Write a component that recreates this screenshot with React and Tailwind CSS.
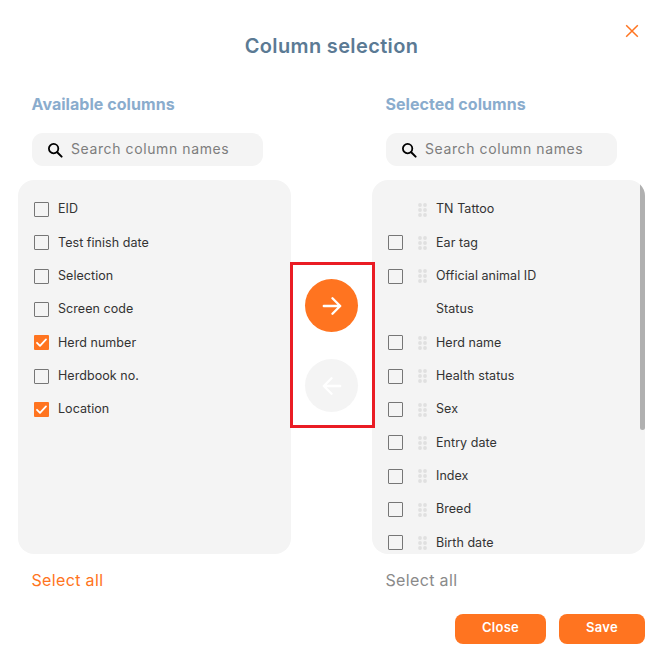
import React from "react";

const Check = ({ checked }) => (
  <span className={checked ? "flex h-[15px] w-[15px] shrink-0 items-center justify-center rounded-[1px] bg-[#ff7420]" : "h-[15px] w-[15px] shrink-0 rounded-[1px] border border-[#767676] bg-[#f4f4f4]"}>
    {checked && (
      <svg width="13" height="13" viewBox="0 0 13 13" fill="none">
        <path d="M2 6.8 L5 9.8 L11 3.4" stroke="#fff" strokeWidth="1.8" strokeLinecap="round" strokeLinejoin="round" />
      </svg>
    )}
  </span>
);

const Dots = () => (
  <svg width="9" height="14" viewBox="0 0 9 14" className="shrink-0" fill="#e0e0e0">
    {[2, 7, 12].map((y) => (
      <g key={y}>
        <circle cx="2" cy={y} r="1.9" />
        <circle cx="7" cy={y} r="1.9" />
      </g>
    ))}
  </svg>
);

const SearchBox = () => (
  <div className="ml-[14px] flex h-[33px] w-[231px] items-center rounded-[11px] bg-[#f4f4f4] pl-[15px]">
    <svg width="16" height="16" viewBox="0 0 16 16" fill="none" className="shrink-0">
      <circle cx="6.6" cy="6.6" r="4.7" stroke="#000" strokeWidth="1.8" />
      <path d="M10.2 10.2 L14.6 14.6" stroke="#000" strokeWidth="2" strokeLinecap="round" />
    </svg>
    <span className="ml-[8px] pb-[2px] text-[14px] leading-none tracking-[0.6px] text-[#7d7d7d]">Search column names</span>
  </div>
);

const left = [
  ["EID"],
  ["Test finish date"],
  ["Selection"],
  ["Screen code"],
  ["Herd number", true],
  ["Herdbook no."],
  ["Location", true],
];

const right = [
  ["TN Tattoo", true],
  ["Ear tag"],
  ["Official animal ID"],
  ["Status", true, true],
  ["Herd name"],
  ["Health status"],
  ["Sex"],
  ["Entry date"],
  ["Index"],
  ["Breed"],
  ["Birth date"],
];

const Heading = ({ children }) => (
  <h2 className="h-[24px] pl-[13.5px] text-[16px] font-bold leading-[23px] tracking-[0.05px] text-[#8aaccd]">{children}</h2>
);

export default function App() {
  return (
    <div className="relative h-[650px] w-[665px] overflow-hidden bg-white font-['Inter',sans-serif]">
      <button className="absolute right-[26px] top-[24px] text-[#ff7420]" aria-label="close">
        <svg width="14" height="14" viewBox="0 0 14 14" fill="none">
          <path d="M1.2 1.2 L12.8 12.8 M12.8 1.2 L1.2 12.8" stroke="currentColor" strokeWidth="1.5" />
        </svg>
      </button>

      <h1 className="pr-[2px] pt-[32px] text-center text-[20px] font-semibold leading-[28px] tracking-[0.35px] text-[#5b7a94]">Column selection</h1>

      <div className="mt-[33px] flex px-[18px]">
        <section className="w-[273px] shrink-0">
          <Heading>Available columns</Heading>
          <div className="mt-[16px]"><SearchBox /></div>
          <div className="mt-[14px] h-[374px] rounded-[16px] bg-[#f4f4f4] pl-[16px] pt-[13px]">
            {left.map(([t, c]) => (
              <div key={t} className="flex h-[33.33px] items-center">
                <Check checked={c} />
                <span className="ml-[9px] text-[12.5px] leading-none tracking-[0.05px] text-[#333]">{t}</span>
              </div>
            ))}
          </div>
          <button className="mt-[16px] block pl-[13.5px] text-[16px] leading-[20px] tracking-[0.35px] text-[#ff7420]">Select all</button>
        </section>

        <div className="relative z-10 w-[81px] shrink-0">
          <div className="-ml-[1px] mt-[169px] flex h-[166px] w-[85px] flex-col items-center border-[3px] border-[#ea1c24] pr-[2px] pt-[14px]">
            <button className="flex h-[53px] w-[53px] items-center justify-center rounded-full bg-[#ff7420]" aria-label="add">
              <svg width="20" height="20" viewBox="0 0 22 22" fill="none" stroke="#fff" strokeWidth="2.6" strokeLinecap="round" strokeLinejoin="round">
                <path d="M2 11 H20 M11.5 2.5 L20 11 L11.5 19.5" />
              </svg>
            </button>
            <button className="mt-[27px] flex h-[53px] w-[53px] items-center justify-center rounded-full bg-[#f4f4f4]" aria-label="remove">
              <svg width="20" height="20" viewBox="0 0 22 22" fill="none" stroke="#fff" strokeWidth="2.6" strokeLinecap="round" strokeLinejoin="round">
                <path d="M20 11 H2 M10.5 2.5 L2 11 L10.5 19.5" />
              </svg>
            </button>
          </div>
        </div>

        <section className="w-[273px] shrink-0">
          <Heading>Selected columns</Heading>
          <div className="mt-[16px]"><SearchBox /></div>
          <div className="relative mt-[14px] h-[374px] overflow-hidden rounded-[16px] bg-[#f4f4f4] pl-[16px] pt-[13px]">
            {right.map(([t, noCheck, noDots]) => (
              <div key={t} className="flex h-[33.33px] items-center">
                {noCheck ? <span className="h-[15px] w-[15px] shrink-0" /> : <Check />}
                <span className="ml-[15px] flex w-[9px] shrink-0">{!noDots && <Dots />}</span>
                <span className="ml-[9px] text-[12.5px] leading-none tracking-[0.05px] text-[#333]">{t}</span>
              </div>
            ))}
            <div className="absolute right-0 top-0 h-[250px] w-[5px] rounded-full bg-[#b0b0b0]" />
          </div>
          <button className="mt-[16px] block pl-[13.5px] text-[16px] leading-[20px] tracking-[0.35px] text-[#8a8a8a]">Select all</button>
          <div className="mt-[24px] flex justify-end gap-[13px]">
            <button className="h-[30px] w-[91px] rounded-[8px] bg-[#ff7420] pb-[2px] text-[13px] font-semibold tracking-[0.3px] text-white">Close</button>
            <button className="h-[30px] w-[86px] rounded-[8px] bg-[#ff7420] pb-[2px] text-[13px] font-semibold tracking-[0.3px] text-white">Save</button>
          </div>
        </section>
      </div>
    </div>
  );
}
